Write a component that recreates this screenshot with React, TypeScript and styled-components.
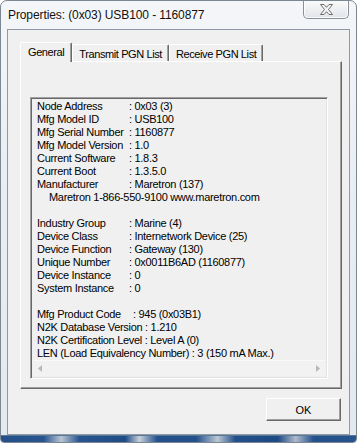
import React from "react";
import styled, { createGlobalStyle } from "styled-components";

const GlobalStyle = createGlobalStyle`
  html, body {
    margin: 0;
    padding: 0;
    background: #ffffff;
  }
  * {
    box-sizing: border-box;
  }
`;

const Window = styled.div`
  width: 357px;
  height: 443px;
  display: flex;
  flex-direction: column;
  border-radius: 7px 7px 4px 4px;
  border: 1px solid #7d8791;
  background: linear-gradient(180deg, #f4f6f9 0%, #e9eef4 40%, #e4e9ef 100%);
  overflow: hidden;
  font-family: "Liberation Sans", Arial, sans-serif;
`;

const TitleBar = styled.div`
  height: 28px;
  display: flex;
  align-items: flex-start;
  justify-content: space-between;
  padding: 0 7px 0 7px;
`;

const Title = styled.div`
  margin-top: 7px;
  font-size: 12px;
  letter-spacing: -0.1px;
  color: #111;
  text-shadow: 0 0 6px #fff, 0 0 10px #fff;
`;

const CloseButton = styled.div`
  width: 46px;
  height: 19px;
  margin-top: -1px;
  border: 1px solid #8b9098;
  border-top: none;
  border-radius: 0 0 5px 5px;
  background: linear-gradient(180deg, #fbfbfb 0%, #eef0f2 50%, #e2e5e9 100%);
  box-shadow: inset 0 0 0 1px rgba(255, 255, 255, 0.8);
  display: flex;
  align-items: center;
  justify-content: center;
`;

const Client = styled.div`
  margin: 0 6px 0 6px;
  height: 406px;
  border: 1px solid #8f9aa6;
  background: #f0f0f0;
  display: flex;
  flex-direction: column;
  padding: 12px 7px 0 12px;
`;

const TabRow = styled.div`
  display: flex;
  align-items: flex-start;
  height: 19px;
  position: relative;
  z-index: 1;
`;

const Tab = styled.div<{ $active?: boolean }>`
  height: ${(p) => (p.$active ? "20px" : "17px")};
  margin-top: ${(p) => (p.$active ? "0" : "2px")};
  padding: ${(p) => (p.$active ? "3px 7px 0 7px" : "3px 6px 0 6px")};
  background: #f0f0f0;
  border-top: 1px solid #ffffff;
  border-left: 1px solid #ffffff;
  border-right: 1px solid #696969;
  box-shadow: inset -1px 0 0 #a0a0a0;
  border-radius: 2px 2px 0 0;
  font-size: 11px;
  letter-spacing: -0.4px;
  line-height: 12px;
  color: #000;
  white-space: nowrap;
`;

const Panel = styled.div`
  height: 328px;
  border-top: 1px solid #ffffff;
  border-left: 1px solid #ffffff;
  border-right: 1px solid #696969;
  border-bottom: 1px solid #696969;
  box-shadow: inset -1px -1px 0 #a0a0a0;
  padding: 35px 13px 9px 9px;
  display: flex;
`;

const ListBox = styled.div`
  flex: 1;
  display: flex;
  flex-direction: column;
  border-style: solid;
  border-width: 1px;
  border-color: #a0a0a0 #ffffff #ffffff #a0a0a0;
  box-shadow: inset 1px 1px 0 #696969, inset -1px -1px 0 #e3e3e3;
  padding: 2px 2px 2px 2px;
`;

const Lines = styled.div`
  flex: 1;
  padding: 0 0 0 4px;
  font-size: 11px;
  letter-spacing: -0.3px;
  line-height: 13px;
  color: #000;
`;

const Row = styled.div<{ $indent?: number }>`
  display: flex;
  height: 13px;
  white-space: nowrap;
  padding-left: ${(p) => p.$indent ?? 0}px;
`;

const Label = styled.span<{ $width: number }>`
  width: ${(p) => p.$width}px;
  flex: none;
`;

const Blank = styled.div`
  height: 13px;
`;

const HScroll = styled.div`
  height: 17px;
  display: flex;
  align-items: center;
  justify-content: space-between;
  padding: 0 5px 0 5px;
  background: #f2f2f2;
  border-top: 1px solid #f9f9f9;
`;

const Footer = styled.div`
  display: flex;
  justify-content: flex-end;
  padding: 9px 1px 0 0;
`;

const OkButton = styled.div`
  width: 75px;
  height: 23px;
  display: flex;
  align-items: center;
  justify-content: center;
  background: #f0f0f0;
  border-top: 1px solid #ffffff;
  border-left: 1px solid #ffffff;
  border-right: 1px solid #696969;
  border-bottom: 1px solid #696969;
  box-shadow: inset -1px -1px 0 #a0a0a0;
  font-size: 11px;
  color: #000;
`;

const BottomEdge = styled.div`
  margin-top: auto;
  height: 7px;
  background: linear-gradient(
    90deg,
    #24508a 0%,
    #28558f 12%,
    #b9c5d3 17%,
    #28558f 22%,
    #1f4b86 35%,
    #c8d0db 39%,
    #24518c 44%,
    #23508b 55%,
    #bcc7d4 61%,
    #23508b 66%,
    #1d4985 78%,
    #aebbcb 83%,
    #24518c 88%,
    #26538d 100%
  );
  border-top: 1px solid #5a7798;
`;

const CloseGlyph = () => (
  <svg width="15" height="11" viewBox="0 0 15 11">
    <path
      d="M1.5 0.5 H5 L7.5 3.3 L10 0.5 H13.5 L9.5 5.5 L13.5 10.5 H10 L7.5 7.7 L5 10.5 H1.5 L5.5 5.5 Z"
      fill="#f4f4f4"
      stroke="#6d6d6d"
      strokeWidth="1"
      strokeLinejoin="round"
    />
  </svg>
);

const ArrowLeft = () => (
  <svg width="4" height="7" viewBox="0 0 4 7">
    <path d="M4 0 L0 3.5 L4 7 Z" fill="#b8b8b8" />
  </svg>
);

const ArrowRight = () => (
  <svg width="4" height="7" viewBox="0 0 4 7">
    <path d="M0 0 L4 3.5 L0 7 Z" fill="#b8b8b8" />
  </svg>
);

interface IField {
  label: string;
  value: string;
}

const identity: IField[] = [
  { label: "Node Address", value: ": 0x03 (3)" },
  { label: "Mfg Model ID", value: ": USB100" },
  { label: "Mfg Serial Number", value: ": 1160877" },
  { label: "Mfg Model Version", value: ": 1.0" },
  { label: "Current Software", value: ": 1.8.3" },
  { label: "Current Boot", value: ": 1.3.5.0" },
  { label: "Manufacturer", value: ": Maretron (137)" },
];

const device: IField[] = [
  { label: "Industry Group", value: ": Marine (4)" },
  { label: "Device Class", value: ": Internetwork Device (25)" },
  { label: "Device Function", value: ": Gateway (130)" },
  { label: "Unique Number", value: ": 0x0011B6AD (1160877)" },
  { label: "Device Instance", value: ": 0" },
  { label: "System Instance", value: ": 0" },
];

const tabs = ["General", "Transmit PGN List", "Receive PGN List"];

export default function App() {
  return (
    <>
      <GlobalStyle />
      <Window>
        <TitleBar>
          <Title>Properties: (0x03) USB100 - 1160877</Title>
          <CloseButton>
            <CloseGlyph />
          </CloseButton>
        </TitleBar>
        <Client>
          <TabRow>
            {tabs.map((t, i) => (
              <Tab key={t} $active={i === 0}>
                {t}
              </Tab>
            ))}
          </TabRow>
          <Panel>
            <ListBox>
              <Lines>
                {identity.map((f) => (
                  <Row key={f.label}>
                    <Label $width={92}>{f.label}</Label>
                    <span>{f.value}</span>
                  </Row>
                ))}
                <Row $indent={12}>Maretron 1-866-550-9100 www.maretron.com</Row>
                <Blank />
                {device.map((f) => (
                  <Row key={f.label}>
                    <Label $width={92}>{f.label}</Label>
                    <span>{f.value}</span>
                  </Row>
                ))}
                <Blank />
                <Row>
                  <Label $width={96}>Mfg Product Code</Label>
                  <span>: 945 (0x03B1)</span>
                </Row>
                <Row>N2K Database Version : 1.210</Row>
                <Row>N2K Certification Level : Level A (0)</Row>
                <Row>LEN (Load Equivalency Number) : 3 (150 mA Max.)</Row>
              </Lines>
              <HScroll>
                <ArrowLeft />
                <ArrowRight />
              </HScroll>
            </ListBox>
          </Panel>
          <Footer>
            <OkButton>OK</OkButton>
          </Footer>
        </Client>
        <BottomEdge />
      </Window>
    </>
  );
}
